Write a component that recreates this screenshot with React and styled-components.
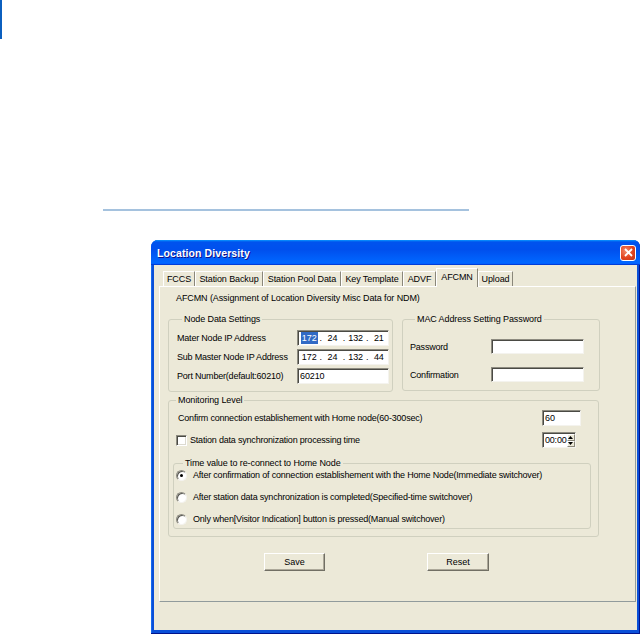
import React from "react";
import styled, { createGlobalStyle } from "styled-components";

const GlobalStyle = createGlobalStyle`
  html, body { margin: 0; padding: 0; background: #fff; }
  body { font-family: "Liberation Sans", Arial, sans-serif; color: #000; }
`;

const Page = styled.div`
  width: 642px;
  height: 634px;
  overflow: hidden;
  display: flex;
  flex-direction: column;
  align-items: flex-start;
`;

const EdgeMark = styled.div`
  width: 2px;
  height: 39px;
  background: #0b5fbf;
`;

const Rule = styled.div`
  margin: 170px 0 0 103px;
  width: 366px;
  height: 2px;
  background: #a5c2de;
`;

const Window = styled.div`
  margin: 29px 0 0 151px;
  width: 489px;
  height: 394px;
  display: flex;
  flex-direction: column;
  background: #0a4fd8;
  border-radius: 7px 7px 0 0;
  overflow: hidden;
  box-shadow: inset -1px -1px #00138c, inset 1px 1px #166aee;
`;

const TitleBar = styled.div`
  height: 25px;
  flex: none;
  display: flex;
  align-items: center;
  justify-content: space-between;
  padding: 0 4px 0 6px;
  background: linear-gradient(
    to bottom,
    #0997ff 0%,
    #0053ee 8%,
    #0050ee 40%,
    #0066ff 88%,
    #0066ff 93%,
    #005bff 95%,
    #003dd7 96%,
    #003dd7 100%
  );
`;

const Title = styled.span`
  color: #fff;
  font-weight: bold;
  font-size: 10.5px;
  letter-spacing: 0.1px;
  text-shadow: 1px 1px #0f1089;
`;

const CloseBox = styled.div`
  width: 14px;
  height: 14px;
  border: 1px solid #fff;
  border-radius: 3px;
  background: radial-gradient(circle at 35% 35%, #f28a6c 0%, #e2441f 55%, #c2341a 100%);
  display: flex;
  align-items: center;
  justify-content: center;
`;

const Frame = styled.div`
  flex: 1;
  margin: 0 3px 4px;
  background: #ece9d8;
  padding-top: 3px;
  display: flex;
  flex-direction: column;
`;

const TabStrip = styled.div`
  display: flex;
  align-items: flex-end;
  height: 18px;
  padding-left: 9px;
  position: relative;
  z-index: 1;
`;

const Tab = styled.div`
  width: ${(p) => p.$w}px;
  height: ${(p) => (p.$active ? 19 : 15)}px;
  margin-bottom: ${(p) => (p.$active ? -1 : 0)}px;
  box-sizing: border-box;
  background: #ece9d8;
  border-top: 1px solid #fff;
  border-left: 1px solid #fff;
  border-right: 1px solid #8a877a;
  display: flex;
  align-items: ${(p) => (p.$active ? "flex-start" : "center")};
  padding-top: ${(p) => (p.$active ? 3 : 0)}px;
  justify-content: center;
  font-size: 9px;
  letter-spacing: -0.1px;
  white-space: nowrap;
`;

const Panel = styled.div`
  margin: 0 1px 0 5px;
  height: 316px;
  box-sizing: border-box;
  border: 1px solid;
  border-color: #fff #919b9c #919b9c #fff;
  padding: 5px 0 0 8px;
  display: flex;
  flex-direction: column;
  align-items: flex-start;
`;

const Heading = styled.div`
  padding-left: 8px;
  line-height: 12px;
  font-size: 9px;
  letter-spacing: -0.1px;
`;

const GroupRow = styled.div`
  display: flex;
  align-items: flex-start;
  gap: 9px;
  margin-top: 9px;
`;

const Group = styled.fieldset`
  margin: ${(p) => p.$m || "0"};
  width: ${(p) => p.$w}px;
  box-sizing: border-box;
  border: 1px solid #d0d0bf;
  border-radius: 3px;
  padding: ${(p) => p.$pad};
  min-inline-size: 0;
`;

const Legend = styled.legend`
  font-size: 9px;
  letter-spacing: -0.1px;
  line-height: 12px;
  padding: 0 2px;
  margin-left: ${(p) => p.$ml || 5}px;
`;

const FormGrid = styled.div`
  display: grid;
  grid-template-columns: ${(p) => p.$cols};
  grid-auto-rows: ${(p) => p.$row}px;
  row-gap: ${(p) => p.$gap}px;
  align-items: center;
`;

const Label = styled.span`
  font-size: 9px;
  letter-spacing: -0.2px;
  white-space: nowrap;
`;

const TextBox = styled.div`
  width: ${(p) => p.$w || 92}px;
  height: ${(p) => p.$h || 16}px;
  box-sizing: border-box;
  background: #fff;
  border-top: 1px solid #8d8b80;
  border-left: 1px solid #8d8b80;
  border-right: 1px solid #f4f3ee;
  border-bottom: 1px solid #f4f3ee;
  box-shadow: inset 1px 1px #4a4a44;
  display: flex;
  align-items: center;
  padding-left: 2px;
  font-size: 9px;
  letter-spacing: -0.1px;
`;

const IpSeg = styled.span`
  width: 19px;
  display: flex;
  justify-content: center;
`;

const IpDot = styled.span`
  width: 5px;
  text-align: center;
`;

const Selected = styled.span`
  background: #316ac5;
  color: #fff;
  padding: 1px 1px;
`;

const MonRow = styled.div`
  display: grid;
  grid-template-columns: 1fr 49px;
  height: 16px;
  align-items: center;
  margin-top: ${(p) => p.$mt || 0}px;
  padding-left: ${(p) => p.$pl || 0}px;
`;

const CheckLine = styled.div`
  display: flex;
  align-items: center;
  gap: 3px;
`;

const CheckBox = styled.span`
  width: 11px;
  height: 11px;
  box-sizing: border-box;
  background: #fff;
  border-top: 1px solid #8d8b80;
  border-left: 1px solid #8d8b80;
  border-right: 1px solid #fff;
  border-bottom: 1px solid #fff;
  box-shadow: inset 1px 1px #4a4a44, inset -1px -1px #dcdad0;
`;

const Spinner = styled.div`
  width: 34px;
  height: 16px;
  box-sizing: border-box;
  background: #fff;
  border-top: 1px solid #8d8b80;
  border-left: 1px solid #8d8b80;
  border-right: 1px solid #f4f3ee;
  border-bottom: 1px solid #f4f3ee;
  box-shadow: inset 1px 1px #4a4a44;
  display: flex;
  align-items: center;
  justify-content: space-between;
  padding-left: 2px;
  font-size: 9px;
  letter-spacing: -0.2px;
`;

const SpinButtons = styled.div`
  width: 9px;
  height: 13px;
  margin-top: 1px;
  display: flex;
  flex-direction: column;
`;

const SpinBtn = styled.div`
  flex: 1;
  background: #ece9d8;
  border-top: 1px solid #fff;
  border-left: 1px solid #fff;
  border-right: 1px solid #8a877a;
  border-bottom: 1px solid #8a877a;
  display: flex;
  align-items: center;
  justify-content: center;
`;

const RadioList = styled.div`
  display: flex;
  flex-direction: column;
  gap: 10px;
`;

const RadioLine = styled.div`
  height: 12px;
  display: flex;
  align-items: center;
  gap: 6px;
`;

const Radio = styled.span`
  width: 11px;
  height: 11px;
  box-sizing: border-box;
  border-radius: 50%;
  background: #fff;
  border: 1px solid;
  border-color: #8d8b80 #f4f3ee #f4f3ee #8d8b80;
  box-shadow: inset 1px 1px #5a5a54;
  display: flex;
  align-items: center;
  justify-content: center;
  &::after {
    content: "";
    width: 3px;
    height: 3px;
    border-radius: 50%;
    background: ${(p) => (p.$on ? "#000" : "transparent")};
  }
`;

const ButtonRow = styled.div`
  display: flex;
  gap: 102px;
  margin: 16px 0 0 96px;
`;

const Button = styled.div`
  width: ${(p) => p.$w}px;
  height: 18px;
  box-sizing: border-box;
  background: #ece9d8;
  border-top: 1px solid #fff;
  border-left: 1px solid #fff;
  border-right: 1px solid #716f64;
  border-bottom: 1px solid #716f64;
  box-shadow: inset -1px -1px #aca899;
  display: flex;
  align-items: center;
  justify-content: center;
  font-size: 9px;
`;

const tabs = [
  ["FCCS", 32],
  ["Station Backup", 68],
  ["Station Pool Data", 78],
  ["Key Template", 62],
  ["ADVF", 33],
  ["AFCMN", 42],
  ["Upload", 35],
];

const IpField = ({ parts, highlight }) => (
  <TextBox $w={92} $h={16}>
    {parts.map((p, i) => (
      <React.Fragment key={i}>
        {i > 0 && <IpDot>.</IpDot>}
        <IpSeg>{i === 0 && highlight ? <Selected>{p}</Selected> : p}</IpSeg>
      </React.Fragment>
    ))}
  </TextBox>
);

export default function App() {
  return (
    <Page>
      <GlobalStyle />
      <EdgeMark />
      <Rule />
      <Window>
        <TitleBar>
          <Title>Location Diversity</Title>
          <CloseBox>
            <svg width="9" height="9" viewBox="0 0 9 9">
              <path d="M1 1L8 8M8 1L1 8" stroke="#fff" strokeWidth="1.8" />
            </svg>
          </CloseBox>
        </TitleBar>
        <Frame>
          <TabStrip>
            {tabs.map(([t, w]) => (
              <Tab key={t} $w={w} $active={t === "AFCMN"}>
                {t}
              </Tab>
            ))}
          </TabStrip>
          <Panel>
            <Heading>AFCMN (Assignment of Location Diversity Misc Data for NDM)</Heading>
            <GroupRow>
              <Group $w={225} $pad="5px 3px 7px 8px">
                <Legend>Node Data Settings</Legend>
                <FormGrid $cols="120px 92px" $row={16} $gap={3}>
                  <Label>Mater Node IP Address</Label>
                  <IpField parts={["172", "24", "132", "21"]} highlight />
                  <Label>Sub Master Node IP Address</Label>
                  <IpField parts={["172", "24", "132", "44"]} />
                  <Label>Port Number(default:60210)</Label>
                  <TextBox>60210</TextBox>
                </FormGrid>
              </Group>
              <Group $w={198} $pad="14px 15px 8px 7px">
                <Legend>MAC Address Setting Password</Legend>
                <FormGrid $cols="81px 93px" $row={15} $gap={13}>
                  <Label>Password</Label>
                  <TextBox $w={93} $h={15} />
                  <Label>Confirmation</Label>
                  <TextBox $w={93} $h={15} />
                </FormGrid>
              </Group>
            </GroupRow>
            <Group $w={431} $m="2px 0 0 0" $pad="4px 7px 7px 4px">
              <Legend $ml={3}>Monitoring Level</Legend>
              <MonRow $pl={5}>
                <Label>Confirm connection establishement with Home node(60-300sec)</Label>
                <TextBox $w={39}>60</TextBox>
              </MonRow>
              <MonRow $mt={6} $pl={3}>
                <CheckLine>
                  <CheckBox />
                  <Label>Station data synchronization processing time</Label>
                </CheckLine>
                <Spinner>
                  <span>00:00</span>
                  <SpinButtons>
                    <SpinBtn>
                      <svg width="5" height="3" viewBox="0 0 5 3">
                        <path d="M2.5 0L5 3H0z" fill="#000" />
                      </svg>
                    </SpinBtn>
                    <SpinBtn>
                      <svg width="5" height="3" viewBox="0 0 5 3">
                        <path d="M0 0H5L2.5 3z" fill="#000" />
                      </svg>
                    </SpinBtn>
                  </SpinButtons>
                </Spinner>
              </MonRow>
              <Group $w={418} $m="9px 0 0 0" $pad="0 2px 3px 2px">
                <Legend $ml={7}>Time value to re-connect to Home Node</Legend>
                <RadioList>
                  <RadioLine>
                    <Radio $on />
                    <Label>
                      After confirmation of connection establishement with the Home Node(Immediate switchover)
                    </Label>
                  </RadioLine>
                  <RadioLine>
                    <Radio />
                    <Label>After station data synchronization is completed(Specified-time switchover)</Label>
                  </RadioLine>
                  <RadioLine>
                    <Radio />
                    <Label>Only when[Visitor Indication] button is pressed(Manual switchover)</Label>
                  </RadioLine>
                </RadioList>
              </Group>
            </Group>
            <ButtonRow>
              <Button $w={61}>Save</Button>
              <Button $w={62}>Reset</Button>
            </ButtonRow>
          </Panel>
        </Frame>
      </Window>
    </Page>
  );
}
